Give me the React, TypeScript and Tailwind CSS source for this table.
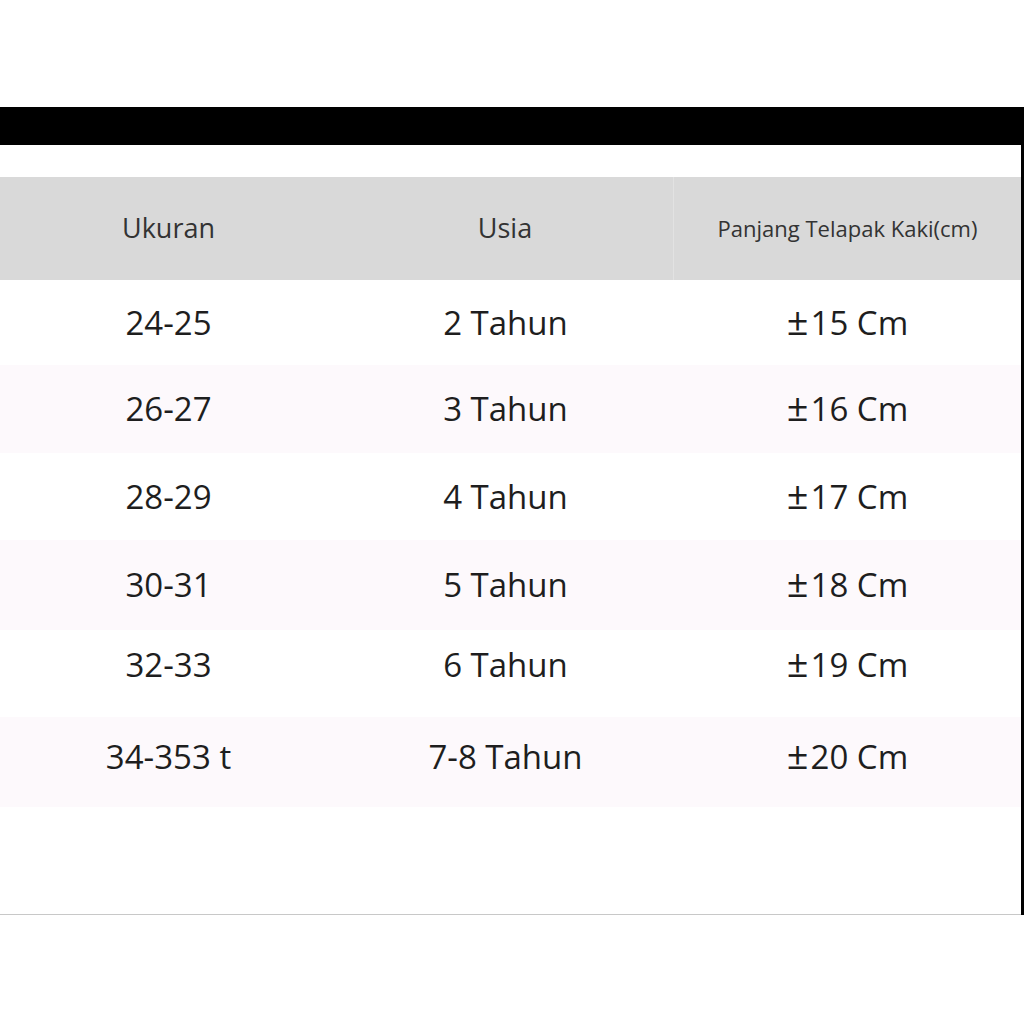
const rows = [
  { ukuran: "24-25", usia: "2 Tahun", cm: "15", h: "h-[85px]", pink: false },
  { ukuran: "26-27", usia: "3 Tahun", cm: "16", h: "h-[88px]", pink: true },
  { ukuran: "28-29", usia: "4 Tahun", cm: "17", h: "h-[87px]", pink: false },
  { ukuran: "30-31", usia: "5 Tahun", cm: "18", h: "h-[90px]", pink: true },
  { ukuran: "32-33", usia: "6 Tahun", cm: "19", h: "h-[87px] pb-[17px]", pink: false },
  { ukuran: "34-353 t", usia: "7-8 Tahun", cm: "20", h: "h-[90px] pb-[10px]", pink: true },
];

function App() {
  return (
    <div className="w-[1024px] h-[1024px] bg-white flex flex-col font-['Open_Sans','Noto_Sans',sans-serif] text-[#1e1e1e]">
      <div className="h-[107px]" />
      <div className="h-[38px] bg-black" />
      <div className="flex h-[770px]">
        <div className="flex-1 flex flex-col border-b border-[#c8c8c8]">
          <div className="h-[32px]" />
          <div className="h-[103px] bg-[#d9d9d9] grid grid-cols-[337px_337px_1fr] items-center">
            <div className="text-center text-[27px] text-[#333]">Ukuran</div>
            <div className="text-center text-[27px] text-[#333] h-full flex items-center justify-center border-r border-[#e2e2e2]">
              Usia
            </div>
            <div className="text-center text-[22px] text-[#333]">Panjang Telapak Kaki(cm)</div>
          </div>
          {rows.map((r) => (
            <div
              key={r.ukuran}
              className={`${r.h} ${r.pink ? "bg-[#fdf9fc]" : "bg-white"} grid grid-cols-[337px_337px_1fr] items-center text-[33px]`}
            >
              <div className="text-center">{r.ukuran}</div>
              <div className="text-center">{r.usia}</div>
              <div className="flex items-baseline justify-center">
                <span className="text-[38px] leading-none mr-[2px]">±</span>
                <span>{r.cm} Cm</span>
              </div>
            </div>
          ))}
        </div>
        <div className="w-[3px] bg-black" />
      </div>
    </div>
  );
}

export default App;
